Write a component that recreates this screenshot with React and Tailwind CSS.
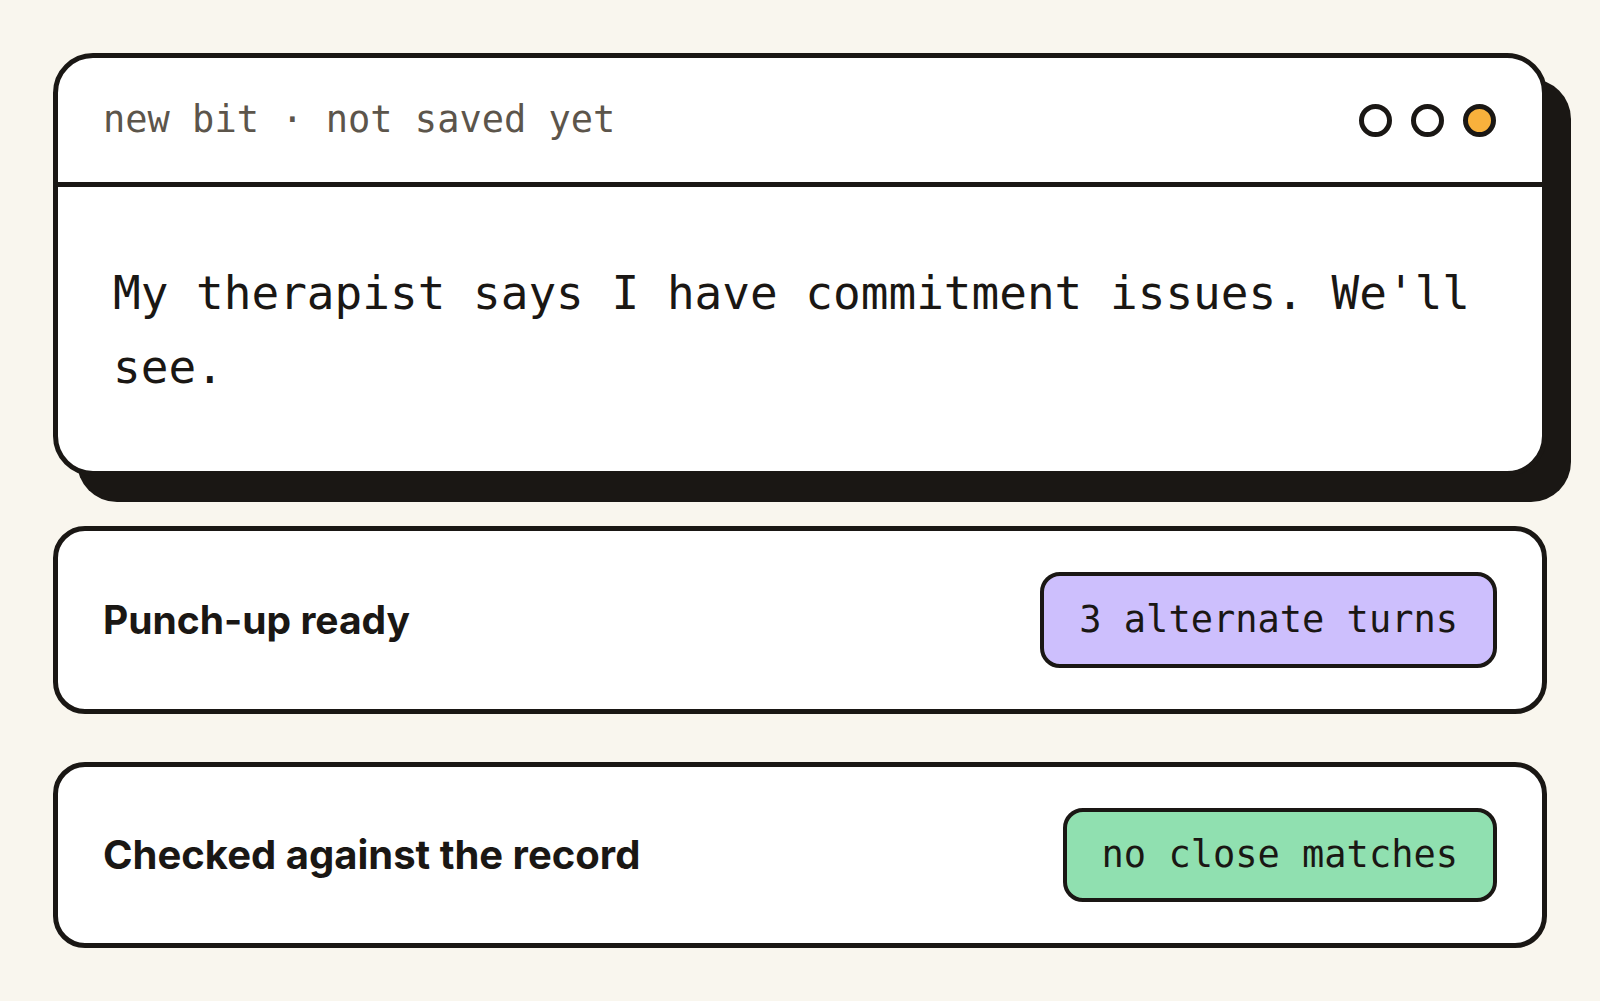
export default function App() {
  const mono = { fontFamily: '"DejaVu Sans Mono", "Liberation Mono", monospace' }
  const sans = { fontFamily: 'Inter, "Noto Sans", sans-serif' }

  return (
    <div className="min-h-screen bg-[#f9f6ee] px-[53px] pt-[53px] pb-[50px]">
      <div className="rounded-[40px] border-[5px] border-[#1a1714] bg-white shadow-[24px_26px_0_0_#1a1714]">
        <div className="flex h-[129px] items-center justify-between border-b-[5px] border-[#1a1714] pl-[45px] pr-[46px]">
          <span className="text-[37px] text-[#5c554b]" style={mono}>
            new bit · not saved yet
          </span>
          <div className="flex items-center gap-[19px]">
            <span className="h-[33px] w-[33px] rounded-full border-[5px] border-[#1a1714] bg-white" />
            <span className="h-[33px] w-[33px] rounded-full border-[5px] border-[#1a1714] bg-white" />
            <span className="h-[33px] w-[33px] rounded-full border-[5px] border-[#1a1714] bg-[#f8b13c]" />
          </div>
        </div>
        <div className="px-[55px] pt-[69px] pb-[67px]">
          <p className="text-[46px] leading-[74px] text-[#1a1714]" style={mono}>
            My therapist says I have commitment issues. We'll see.
          </p>
        </div>
      </div>

      <div className="mt-[50px] flex flex-col gap-[48px]">
        <div className="flex items-center justify-between rounded-[32px] border-[5px] border-[#1a1714] bg-white py-[41px] pl-[45px] pr-[45px]">
          <span className="text-[39px] font-bold text-[#1a1714]" style={sans}>
            Punch-up ready
          </span>
          <span
            className="flex h-[96px] items-center rounded-[20px] border-4 border-[#1a1714] bg-[#cdbffd] px-[35px] text-[37px] text-[#1a1714]"
            style={mono}
          >
            3 alternate turns
          </span>
        </div>
        <div className="flex items-center justify-between rounded-[32px] border-[5px] border-[#1a1714] bg-white py-[41px] pl-[45px] pr-[45px]">
          <span className="text-[40px] font-bold text-[#1a1714]" style={sans}>
            Checked against the record
          </span>
          <span
            className="flex h-[94px] items-center rounded-[20px] border-4 border-[#1a1714] bg-[#90e0b0] px-[35px] text-[37px] text-[#1a1714]"
            style={mono}
          >
            no close matches
          </span>
        </div>
      </div>
    </div>
  )
}
